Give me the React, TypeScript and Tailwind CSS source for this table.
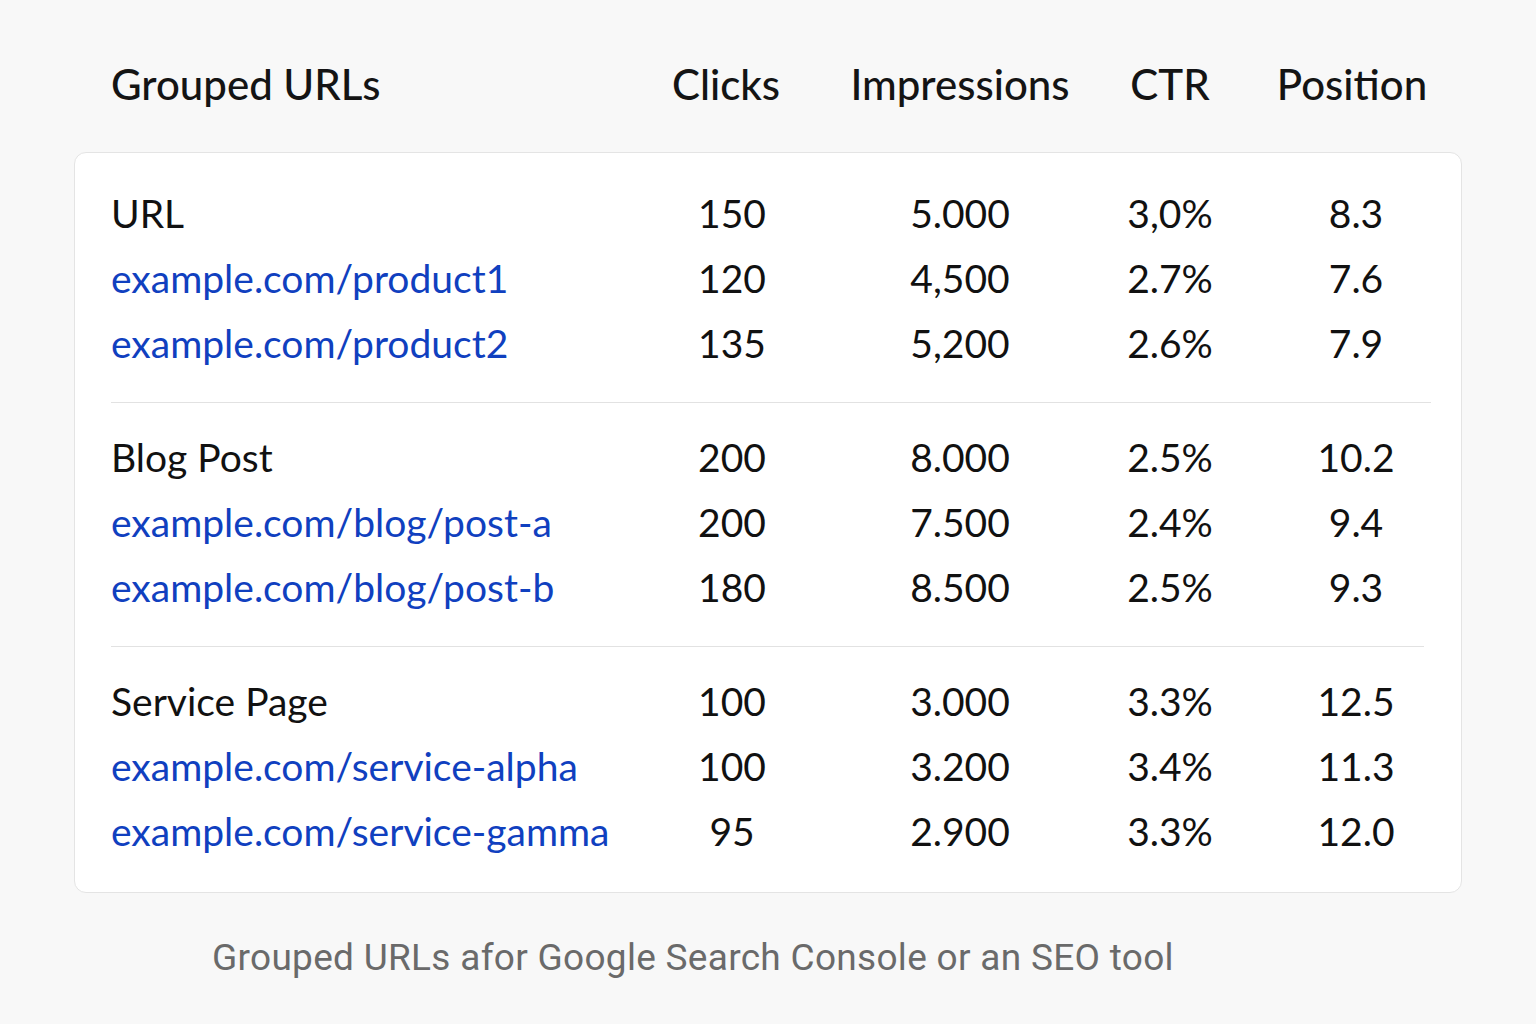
import React from "react";

type Row = { url: string; clicks: string; imp: string; ctr: string; pos: string; link?: boolean };

const groups: Row[][] = [
  [
    { url: "URL", clicks: "150", imp: "5.000", ctr: "3,0%", pos: "8.3" },
    { url: "example.com/product1", clicks: "120", imp: "4,500", ctr: "2.7%", pos: "7.6", link: true },
    { url: "example.com/product2", clicks: "135", imp: "5,200", ctr: "2.6%", pos: "7.9", link: true },
  ],
  [
    { url: "Blog Post", clicks: "200", imp: "8.000", ctr: "2.5%", pos: "10.2" },
    { url: "example.com/blog/post-a", clicks: "200", imp: "7.500", ctr: "2.4%", pos: "9.4", link: true },
    { url: "example.com/blog/post-b", clicks: "180", imp: "8.500", ctr: "2.5%", pos: "9.3", link: true },
  ],
  [
    { url: "Service Page", clicks: "100", imp: "3.000", ctr: "3.3%", pos: "12.5" },
    { url: "example.com/service-alpha", clicks: "100", imp: "3.200", ctr: "3.4%", pos: "11.3", link: true },
    { url: "example.com/service-gamma", clicks: "95", imp: "2.900", ctr: "3.3%", pos: "12.0", link: true },
  ],
];

const cols = "grid grid-cols-[507px_228px_228px_192px_180px] items-center";

function DataRow({ row }: { row: Row }) {
  return (
    <div className={`${cols} h-[65px] text-[39px] text-[#111]`}>
      <span className={row.link ? "text-[#1040bf] whitespace-nowrap" : "whitespace-nowrap"}>{row.url}</span>
      <span className="text-center">{row.clicks}</span>
      <span className="text-center">{row.imp}</span>
      <span className="text-center">{row.ctr}</span>
      <span className="text-center">{row.pos}</span>
    </div>
  );
}

export default function App() {
  return (
    <main
      className="min-h-screen w-[1536px] h-[1024px] bg-[#f8f8f8] px-[74px] pt-[51px]"
      style={{ fontFamily: "Lato, 'Noto Sans', sans-serif" }}
    >
      <div className={`${cols} h-[66px] pl-[37px] text-[42px] font-medium text-[#141414]`}>
        <span>Grouped URLs</span>
        <span className="text-center pr-[12px]">Clicks</span>
        <span className="text-center">Impressions</span>
        <span className="text-center">CTR</span>
        <span className="text-center pr-[8px]">Position</span>
      </div>

      <div className="mt-[35px] w-[1388px] rounded-[12px] border border-[#e4e4e4] bg-white pl-[36px] pt-[28px] pb-[28px]">
        {groups.map((g, i) => (
          <div key={i}>
            {i > 0 && (
              <div className={`mt-[26px] mb-[22px] h-px bg-[#e2e2e2] ${i === 1 ? "w-[1320px]" : "w-[1313px]"}`} />
            )}
            {g.map((r) => (
              <DataRow key={r.url} row={r} />
            ))}
          </div>
        ))}
      </div>

      <p
        className="mt-[45px] pl-[138px] text-[37px] leading-[40px] tracking-[0.3px] text-[#6a6a6a]"
        style={{ fontFamily: "Roboto, 'Noto Sans', sans-serif" }}
      >
        Grouped URLs afor Google Search Console or an SEO tool
      </p>
    </main>
  );
}
